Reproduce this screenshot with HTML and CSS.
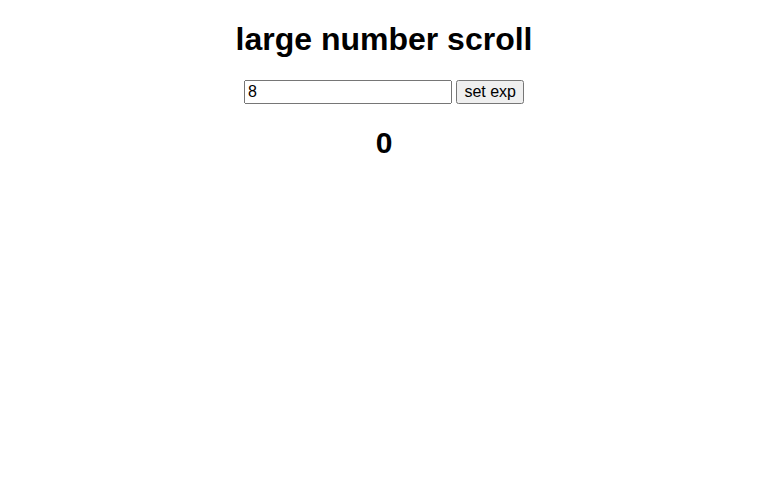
FILE: index.html
```html
<!DOCTYPE html>
<html lang="en">
<head>
    <meta charset="UTF-8">
    <meta name="viewport" content="width=device-width, initial-scale=1.0">
    <title>large number scroll</title>
    <link rel="stylesheet" href="styles.css">
</head>
<body>
    <div id="app">
        <h1>large number scroll</h1>
        <div class="controls">
            <input type="text" id="expInput" value="8">
            <button id="setExp">set exp</button>
        </div>
        <p class="number" id="number">0</p>
    </div>
</body>
</html>
```

FILE: styles.css
```css
body{
    margin: 0;
    font-family: "Liberation Sans", Arial, sans-serif;
}

#app{
    text-align: center;
}

h1{
    font-size: 32px;
}

.controls input{
    width: 200px;
    font-family: "Liberation Sans", Arial, sans-serif;
    font-size: 16px;
}

.controls button{
    font-family: "Liberation Sans", Arial, sans-serif;
    font-size: 16px;
}

.number{
    font-size: 30px;
    font-weight: bold;
    margin: 22px 0;
}
```
